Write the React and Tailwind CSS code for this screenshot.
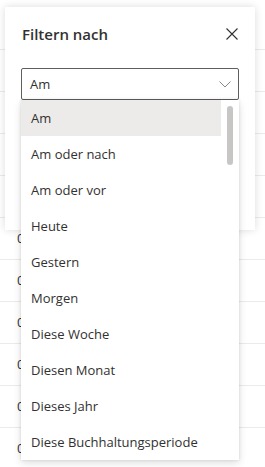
import React from 'react'

const options = [
  'Am',
  'Am oder nach',
  'Am oder vor',
  'Heute',
  'Gestern',
  'Morgen',
  'Diese Woche',
  'Diesen Monat',
  'Dieses Jahr',
  'Diese Buchhaltungsperiode',
]

// only the first digit of each date peeks out from under the dropdown
const rows = ['', '', '', '', '', '0', '0', '0', '0', '0', '0']

export default function App() {
  return (
    <div
      className="relative w-[265px] h-[467px] overflow-hidden bg-white text-[#323130]"
      style={{ fontFamily: '"Segoe UI", "Open Sans", sans-serif' }}
    >
      {/* table behind the panel */}
      <div className="pt-[8px]">
        {rows.map((r, i) => (
          <div key={i} className="h-[42px] border-b border-[#edebe9] flex items-center pl-[17px] text-[13px]">
            {r}
          </div>
        ))}
      </div>

      {/* filter panel */}
      <div className="absolute left-[5px] top-[7px] w-[250px] h-[223px] bg-white shadow-[0_0_8px_rgba(0,0,0,0.14)] px-[16px] pt-[17px]">
        <div className="h-[20px] flex items-center justify-between">
          <span className="pl-[1px] text-[15px] font-semibold">Filtern nach</span>
          <svg width="12" height="12" viewBox="0 0 12 12" className="mr-[1px]">
            <path d="M0.5 0.5 L11.5 11.5 M11.5 0.5 L0.5 11.5" stroke="#323130" strokeWidth="1.1" fill="none" />
          </svg>
        </div>
        <div className="mt-[24px] h-[32px] border border-[#605e5c] rounded-[2px] flex items-center justify-between pl-[8px] pr-[7px] pt-[1px] text-[13px]">
          <span>Am</span>
          <svg width="12" height="7" viewBox="0 0 12 7">
            <path d="M0.5 0.5 L6 6 L11.5 0.5" stroke="#8a8886" strokeWidth="1" fill="none" />
          </svg>
        </div>
      </div>

      {/* dropdown list */}
      <div className="absolute left-[21px] top-[100px] w-[218px] bg-white flex shadow-[0_3px_8px_rgba(0,0,0,0.13),0_0_3px_rgba(0,0,0,0.11)]">
        <div className="w-[200px]">
          {options.map((o, i) => (
            <div
              key={o}
              className={`h-[36px] flex items-center pl-[10px] pt-[2px] text-[13px] ${i === 0 ? 'bg-[#edebe9]' : ''}`}
            >
              {o}
            </div>
          ))}
        </div>
        <div className="flex-1 pt-[6px] flex justify-center">
          <div className="w-[6px] h-[59px] rounded-full bg-[#c8c6c4]" />
        </div>
      </div>
    </div>
  )
}
